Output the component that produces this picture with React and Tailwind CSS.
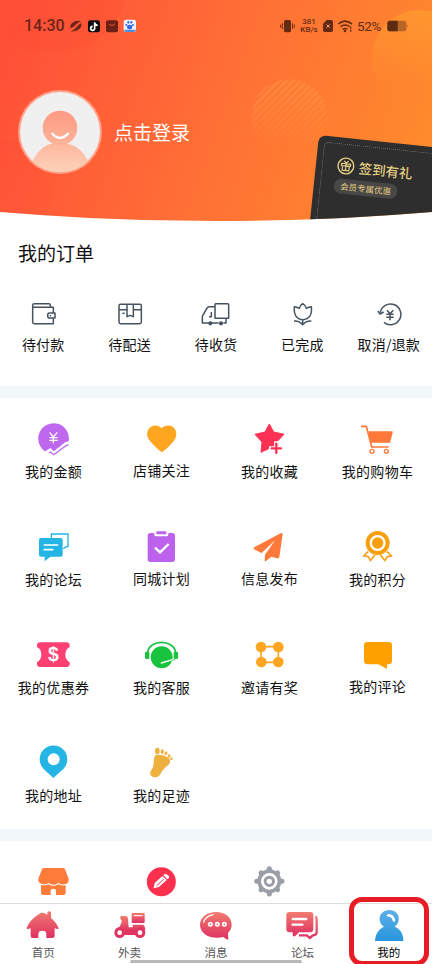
import React from 'react';

const Icon = ({ box, className = 'w-9 h-9', children }) => (
    <svg viewBox={box} className={className} fill="none">
        {children}
    </svg>
);

const orders = [
    {
        label: '待付款',
        box: '82 204 96 96',
        icon: (
            <>
                <path d="M99 231V226Q99 221 104 221H148Q152 221 152 226V231" />
                <path d="M161 249V232H99V276Q99 281 104 281H161V264" />
                <path d="M149 249H166V264H149Q144 264 144 257Q144 249 149 249Z" />
                <path d="M150 257H154" />
            </>
        ),
    },
    {
        label: '待配送',
        box: '341 204 96 96',
        icon: (
            <>
                <path d="M360 223H419Q423 223 423 228V276Q423 281 418 281H361Q356 281 356 276V228Q356 223 360 223Z" />
                <path d="M356 239H380M399 239H423" />
                <path d="M380 224V260L389 256L399 260V224" />
                <path d="M366 250H373" />
            </>
        ),
    },
    {
        label: '待收货',
        box: '600 204 96 96',
        icon: (
            <>
                <path d="M645 265V223Q645 221 648 221H683Q686 221 686 224V265H645Z" />
                <path d="M644 230H627Q622 231 620 236L607 259V279H656M670 279H678V266" />
                <path d="M634 246V260H627" />
                <circle cx="631" cy="280" r="4" fill="#46535f" />
                <circle cx="663" cy="280" r="4" fill="#46535f" />
            </>
        ),
    },
    {
        label: '已完成',
        box: '211 204 96 96',
        icon: (
            <>
                <path d="M236 230Q244 230 251 235Q253 226 261 221Q270 226 272 235Q279 230 287 230Q291 267 261 269Q233 267 236 230Z" />
                <path d="M261 269V285M235 273Q251 272 261 284Q271 272 287 273" />
            </>
        ),
    },
    {
        label: '取消/退款',
        box: '471 204 96 96',
        icon: (
            <>
                <path d="M493 248A31 31 0 1 1 504 277" />
                <path d="M486 243L492 252L503 246" />
                <path d="M513 241L522 251L532 241M522 251V271M511 253H533M511 262H533" />
            </>
        ),
    },
];

const services = [
    {
        label: '我的金额',
        box: '108 60 108 108',
        icon: (
            <>
                <path
                    d="M139 156A46 46 0 1 1 206 124L195 127L160 156L151 148Z"
                    fill="#bd68ee"
                />
                <path d="M137 156L151 147L161 157L196 132H205" stroke="#fff" strokeWidth="5" />
                <path d="M147 159L151 156L161 164L198 137L205 135" stroke="#bd68ee" strokeWidth="4" />
                <path d="M149 97L160 111L172 97M160 111V130M148 113H173M148 121H173" stroke="#fff" strokeWidth="4" />
            </>
        ),
    },
    {
        label: '店铺关注',
        up: true,
        box: '432 60 108 108',
        icon: (
            <path
                d="M485 85C477 75 463 74 453 80C440 88 438 106 447 119C456 131 470 144 481 154Q485 158 490 154C502 144 516 131 524 119C532 106 530 88 518 80C507 74 493 75 485 85Z"
                fill="#ffa51f"
            />
        ),
    },
    {
        label: '我的收藏',
        box: '108 60 108 108',
        icon: (
            <>
                <path
                    d="M160 72L173 96L204 103L184 124L188 150L160 145L135 157L138 126L117 103L147 96Z"
                    fill="#fd3154"
                    stroke="#fd3154"
                    strokeWidth="3"
                    strokeLinejoin="round"
                />
                <path d="M181 124V166M159 145H202" stroke="#fff" strokeWidth="13" />
                <path d="M181 131V159M167 145H195" stroke="#fd3154" strokeWidth="7" strokeLinecap="round" />
            </>
        ),
    },
    {
        label: '我的购物车',
        box: '432 60 108 108',
        icon: (
            <>
                <path d="M457 94H527Q531 94 530 98L522 128H464Z" fill="#ff793a" />
                <path d="M435 79H451L467 141H518" stroke="#ff793a" strokeWidth="5" />
                <circle cx="468" cy="154" r="6" stroke="#ff793a" strokeWidth="4" />
                <circle cx="511" cy="154" r="6" stroke="#ff793a" strokeWidth="4" />
            </>
        ),
    },
    {
        label: '我的论坛',
        box: '108 384 108 108',
        icon: (
            <>
                <path d="M154 414V402H204V440H198L190 446" stroke="#24b5e5" strokeWidth="4" />
                <path
                    d="M123 414H182Q188 414 188 420V464Q188 470 182 470H151L134 484V470H123Q117 470 117 464V420Q117 414 123 414Z"
                    fill="#24b5e5"
                />
                <path d="M133 435H173M133 449H158" stroke="#fff" strokeWidth="5" strokeLinecap="round" />
            </>
        ),
    },
    {
        label: '同城计划',
        up: true,
        box: '432 384 108 108',
        icon: (
            <>
                <rect x="443" y="399" width="82" height="87" rx="8" fill="#bd62ed" />
                <path d="M463 396V404Q463 409 468 409H500Q505 409 505 404V396Z" fill="#fff" />
                <rect x="469" y="394" width="30" height="9" rx="2" fill="#bd62ed" />
                <path d="M465 443L480 457L506 432" stroke="#fff" strokeWidth="7" />
            </>
        ),
    },
    {
        label: '信息发布',
        up: true,
        box: '108 384 108 108',
        icon: (
            <path
                d="M113 445Q112 443 116 441L194 400Q200 397 200 403L190 471Q189 476 184 475L166 470L149 484Q147 485 146 482L147 464L177 421L137 459L116 449Z"
                fill="#ff793a"
            />
        ),
    },
    {
        label: '我的积分',
        box: '432 384 108 108',
        icon: (
            <>
                <path d="M456 455L443 468L457 470L463 482L477 464" stroke="#f99f18" strokeWidth="5" strokeLinejoin="round" />
                <path d="M513 455L527 468L514 470L507 482L493 464" stroke="#f99f18" strokeWidth="5" strokeLinejoin="round" />
                <circle cx="485" cy="429" r="30" fill="#fff" stroke="#f99f0d" strokeWidth="12" />
                <circle cx="485" cy="429" r="17" fill="#f99f0d" />
            </>
        ),
    },
    {
        label: '我的优惠券',
        box: '108 78 108 108',
        icon: (
            <>
                <path
                    d="M120 97H200Q208 97 209 105L209 111Q196 118 196 134Q196 150 209 156V163Q208 171 200 171H120Q112 171 111 163V156Q124 150 124 134Q124 118 111 111V105Q112 97 120 97Z"
                    fill="#fe4172"
                />
                <text
                    x="160"
                    y="154"
                    textAnchor="middle"
                    fontSize="58"
                    fontWeight="700"
                    fill="#fff"
                    fontFamily="Liberation Sans, sans-serif"
                >
                    $
                </text>
            </>
        ),
    },
    {
        label: '我的客服',
        box: '432 78 108 108',
        icon: (
            <>
                <path d="M443 128C446 87 523 87 527 128" stroke="#18c43e" strokeWidth="5" />
                <rect x="435" y="125" width="13" height="22" rx="4" fill="#18c43e" />
                <rect x="521" y="125" width="13" height="22" rx="4" fill="#18c43e" />
                <circle cx="485" cy="142" r="33" fill="#18c43e" />
                <path d="M484 159L518 149" stroke="#fff" strokeWidth="4" strokeLinecap="round" />
                <path d="M517 151Q525 150 528 144" stroke="#18c43e" strokeWidth="3" />
            </>
        ),
    },
    {
        label: '邀请有奖',
        box: '108 78 108 108',
        icon: (
            <>
                <path d="M135 110H187V157H135Z" stroke="#ffa522" strokeWidth="5" />
                <g fill="#ffa522">
                    <circle cx="135" cy="111" r="16" />
                    <circle cx="187" cy="111" r="16" />
                    <circle cx="136" cy="156" r="16" />
                    <circle cx="187" cy="156" r="16" />
                </g>
            </>
        ),
    },
    {
        label: '我的评论',
        up: true,
        box: '432 78 108 108',
        icon: (
            <path
                d="M454 96H518Q528 96 528 106V153Q528 162 518 163H513V177L487 163H454Q444 162 444 153V106Q444 96 454 96Z"
                fill="#ffa000"
            />
        ),
    },
    {
        label: '我的地址',
        box: '108 402 108 108',
        icon: (
            <>
                <path d="M160 504L131 477A41.500 41.500 0 1 1 190 477Z" fill="#24b5e5" />
                <circle cx="161" cy="448" r="18" fill="#fff" />
            </>
        ),
    },
    {
        label: '我的足迹',
        box: '432 402 108 108',
        icon: (
            <g fill="#eeb13f">
                <path d="M468 435Q489 431 505 443Q515 452 507 463Q486 480 481 493Q475 504 460 501Q446 496 453 482Q463 469 461 452Q462 438 468 435Z" />
                <ellipse cx="472" cy="423" rx="7" ry="10" />
                <ellipse cx="487" cy="425" rx="5" ry="7" />
                <ellipse cx="498" cy="430" rx="4" ry="6" transform="rotate(20 498 430)" />
                <ellipse cx="507" cy="438" rx="4" ry="5" transform="rotate(30 507 438)" />
                <ellipse cx="514" cy="446" rx="4" ry="4" />
            </g>
        ),
    },
];

const tools = [
    {
        name: 'shop',
        box: '108 129 108 108',
        icon: (
            <>
                <path d="M132 144H189Q193 144 195 148L206 176Q208 191 194 192Q184 197 176 188Q161 200 145 188Q137 197 125 191Q113 188 115 176L126 148Q128 144 132 144Z" fill="#ff7b39" />
                <path d="M123 195Q136 198 145 193Q161 202 176 193Q186 199 197 195V219Q196 225 190 225H168V212Q168 206 160 206Q152 206 152 212V225H130Q124 225 123 219Z" fill="#ff7b39" />
            </>
        ),
    },
    {
        name: 'edit',
        box: '432 129 108 108',
        icon: (
            <>
                <circle cx="484" cy="185" r="43.5" fill="#ff304e" />
                <path d="M461 205L464 189L487 168L500 180L477 201Z" fill="#fff" />
                <path d="M490 165L495 161Q498 160 506 167Q509 171 507 174L502 178Z" fill="#fff" />
                <path d="M470 197L491 178" stroke="#ff304e" strokeWidth="3" />
            </>
        ),
    },
    {
        name: 'settings',
        box: '108 129 108 108',
        icon: (
            <>
                <g stroke="#9a9fa7" strokeWidth="15" strokeLinecap="round">
                    <path d="M160 146V222M122 184H198" />
                    <path d="M135 159L185 209M185 159L135 209" />
                </g>
                <circle cx="160" cy="184" r="36" fill="#9a9fa7" />
                <circle cx="160" cy="184" r="21" stroke="#fff" strokeWidth="8" />
                <circle cx="160" cy="184" r="8" fill="#fff" />
            </>
        ),
    },
];

const tabs = [
    {
        label: '首页',
        box: '76 261 108 108',
        icon: (
            <path
                d="M123 279Q128 277 133 279L143 284V277Q149 270 154 277V294Q170 307 177 325Q177 328 173 327L165 325V348Q165 354 158 354H140V342Q140 332 128 332Q116 332 116 342V354H99Q93 354 93 348V325L85 327Q80 328 81 324Q91 297 123 279Z"
                fill="url(#pink)"
            />
        ),
    },
    {
        label: '外卖',
        box: '335 261 108 108',
        icon: (
            <>
                <path d="M362 288H377Q383 290 383 297L385 322H397V314H429Q434 319 435 327L432 334H360L343 335Q344 325 358 320L365 304L361 297Q357 292 362 288Z" fill="url(#pink)" />
                <path d="M365 331H424V345H365Z" fill="#e03563" />
                <rect x="394" y="279" width="39" height="30" rx="3" fill="url(#pink)" />
                <path d="M400 287H427" stroke="#fff" strokeWidth="3" />
                <circle cx="358" cy="338" r="16" fill="#e03563" />
                <circle cx="419" cy="338" r="16" fill="#e03563" />
                <circle cx="358" cy="338" r="7" fill="#fff" />
                <circle cx="419" cy="338" r="7" fill="#fff" />
            </>
        ),
    },
    {
        label: '消息',
        box: '594 261 108 108',
        icon: (
            <>
                <path d="M648 276C674 276 695 291 695 314C695 325 690 332 684 338L685 359Q679 359 670 351C637 359 600 345 600 314C600 292 622 276 648 276Z" fill="url(#pink)" />
                <circle cx="631" cy="313" r="5" stroke="#fff" strokeWidth="5" />
                <circle cx="652" cy="313" r="5" stroke="#fff" strokeWidth="5" />
                <circle cx="673" cy="313" r="5" stroke="#fff" strokeWidth="5" />
                <path d="M611 306Q615 290 639 284" stroke="#fff" strokeWidth="4" strokeLinecap="round" />
            </>
        ),
    },
    {
        label: '论坛',
        box: '205 261 108 108',
        icon: (
            <>
                <path d="M299 290Q303 292 303 298V337Q302 346 291 346L283 354L273 346H250" stroke="url(#pink)" strokeWidth="7" strokeLinejoin="round" />
                <path d="M221 276H284Q293 276 293 285V328Q292 337 284 337H250L238 349Q231 350 231 344V337H221Q212 337 212 328V285Q212 276 221 276Z" fill="url(#pink)" />
                <path d="M231 297H272M231 314H260" stroke="#fff" strokeWidth="7" strokeLinecap="round" />
            </>
        ),
    },
    {
        label: '我的',
        active: true,
        box: '464 261 108 108',
        icon: (
            <>
                <path d="M519 270C552 271 555 307 535 320C553 327 561 343 561 363H476C477 343 486 328 503 320C482 307 486 271 519 270Z" fill="url(#sky)" />
                <path d="M516 286Q529 285 533 301" stroke="#fff" strokeWidth="8" strokeLinecap="round" />
            </>
        ),
    },
];

const StatusBar = () => (
    <div className="relative flex items-center h-[52px] pl-6 pr-6 text-[#6b2418]">
        <span className="w-[45px] text-[16px] font-medium font-[Roboto,sans-serif]">14:30</span>
        <Icon box="207 56 204 42" className="w-[68px] h-[14px]">
            <path d="M211 84Q209 71 221 65Q231 59 243 62Q233 66 226 74Q219 82 211 84Z" fill="#6b2418" />
            <path d="M244 68Q246 79 237 87Q227 95 212 93Q222 90 228 82Q235 73 244 68Z" fill="#6b2418" />
            <rect x="264" y="60" width="36" height="36" rx="7" fill="#130d12" />
            <path d="M284 66V84A6 6 0 1 1 278 78M284 68Q286 75 293 75" stroke="#fff" strokeWidth="5" />
            <rect x="318" y="60" width="36" height="36" rx="6" fill="#6b2014" />
            <path d="M327 70Q335 81 345 70" stroke="#ff5c38" strokeWidth="3" />
            <rect x="371" y="58" width="37" height="37" rx="7" fill="#eef4ff" />
            <path d="M372 88H408Q407 95 400 95H379Q373 95 372 88Z" fill="#4c8ddd" />
            <g fill="#3567df">
                <ellipse cx="389" cy="80" rx="8" ry="7" />
                <circle cx="379" cy="74" r="3" />
                <circle cx="399" cy="74" r="3" />
                <ellipse cx="385" cy="66" rx="3" ry="4" />
                <ellipse cx="394" cy="66" rx="3" ry="4" />
            </g>
        </Icon>
        <div className="ml-auto flex items-center text-[#642a14]">
            <Icon box="191 56 45 42" className="w-[15px] h-[14px]">
                <rect x="203" y="59" width="21" height="37" rx="5" fill="#642a14" />
                <path d="M198 69V86M229 69V86M193 73V82M234 73V82" stroke="#642a14" strokeWidth="3" />
            </Icon>
            <div className="flex flex-col items-center w-[28px] text-[8px] leading-[8px] font-medium font-[Roboto,sans-serif]">
                <span>381</span>
                <span>KB/s</span>
            </div>
            <Icon box="321 56 90 42" className="w-[30px] h-[14px]">
                <path d="M332 59H345Q351 59 351 65V90Q351 95 346 95H326Q321 95 321 90V70Z" fill="#642a14" />
                <path d="M332 73L341 82M341 73L332 82" stroke="#ffb08a" strokeWidth="3" />
                <g stroke="#642a14" strokeWidth="5">
                    <path d="M367 71Q386 54 408 71M374 79Q387 69 401 79M380 87Q387 82 394 87" />
                </g>
                <circle cx="387" cy="92" r="4" fill="#642a14" />
                <path d="M404 79V85M404 88V94" stroke="#642a14" strokeWidth="4" />
            </Icon>
            <span className="ml-[4px] w-[30px] text-[13.5px] tracking-tight font-[Roboto,sans-serif]">52%</span>
            <Icon box="512 61 63 36" className="w-[21px] h-[12px]">
                <rect x="513" y="63" width="57" height="32" rx="8" fill="#b86528" />
                <path d="M571 73Q577 79 571 85Z" fill="#b86528" />
                <path d="M521 63H544V95H521Q513 95 513 87V71Q513 63 521 63Z" fill="#5d2a12" />
            </Icon>
        </div>
    </div>
);

const MemberCard = () => (
    <div className="absolute left-[319px] top-[135px] w-[150px] h-[120px] origin-top-left rotate-6 rounded-[7px] bg-[#2e2e2f] text-[#e3cd82]">
        <div className="absolute inset-[6px] rounded-[5px] border border-dotted border-[#77746c]" />
        <div className="relative flex items-center gap-1 pl-[21px] pt-[18px]">
            <Icon box="0 0 24 24" className="w-[18px] h-[18px]">
                <g stroke="#e3cd82" strokeWidth="1.6">
                    <circle cx="12" cy="12" r="10.5" strokeWidth="1.9" />
                    <path d="M6 9H18V12H6ZM7.5 12V18H16.5V12M12 9V18M12 8L9 5.5M12 8L15 5.5" />
                </g>
            </Icon>
            <span className="text-[13.5px] leading-[20px] font-medium whitespace-nowrap">签到有礼</span>
        </div>
        <div className="relative ml-[20px] mt-[3px] flex items-center justify-center w-[64px] h-[15px] rounded-full bg-[#484746] text-[8.5px] whitespace-nowrap">
            会员专属优惠
        </div>
    </div>
);

const Header = () => (
    <header className="relative h-[221px] shrink-0 overflow-hidden bg-linear-[110deg] from-[#ff5038] from-5% via-[#ff6f36] via-50% to-[#ff8e2b] [clip-path:circle(2592px_at_50%_-2371px)]">
        <div className="absolute -left-[30px] -top-[90px] w-[158px] h-[142px] rounded-full bg-linear-to-br from-[#ff5a38]/0 to-[#fa4930]/30" />
        <div className="absolute -left-[70px] top-[137px] w-[120px] h-[120px] rounded-full bg-linear-to-b from-[#fb4b39]/25 to-[#fb4b39]/0" />
        <div className="absolute left-[372px] top-[10px] w-[96px] h-[96px] rounded-full bg-linear-to-b from-[#ffa22f]/60 to-[#ff9029]/0 to-80%" />
        <div className="absolute left-[251px] top-[79px] w-[77px] h-[77px] rounded-full bg-[repeating-linear-gradient(135deg,#ffa04a66_0px,#ffa04a66_2px,#ff8a3a33_3px,#ff8a3a33_5px)] mask-b-from-20% mask-b-to-90%" />
        <StatusBar />
        <div className="relative flex items-center gap-[12px] mt-[38px] pl-[18px]">
            <Icon box="54 270 252 252" className="w-[84px] h-[84px]">
                <circle cx="180" cy="396" r="126" fill="#ffa28b" />
                <circle cx="180" cy="396" r="120" fill="#f0f0f0" />
                <path d="M97 483Q125 432 165 430H195Q239 435 264 483Q230 516 180 516Q130 516 97 483Z" fill="url(#body)" />
                <circle cx="180" cy="384" r="52" fill="url(#face)" />
                <path d="M157 401Q180 426 204 401" stroke="#fff" strokeWidth="7" strokeLinecap="round" />
            </Icon>
            <span className="text-[19px] leading-6 text-white">点击登录</span>
        </div>
        <MemberCard />
    </header>
);

const App = () => (
    <div className="relative flex flex-col w-[432px] h-[964px] overflow-hidden bg-white text-[#111] font-['Noto_Sans_CJK_SC',sans-serif]">
        <svg className="absolute w-0 h-0">
            <defs>
                <linearGradient id="pink" x1="0" y1="0" x2="0" y2="1">
                    <stop offset="0" stopColor="#f17c70" />
                    <stop offset="1" stopColor="#df2f62" />
                </linearGradient>
                <linearGradient id="sky" x1="0" y1="0" x2="0" y2="1">
                    <stop offset="0" stopColor="#5cb0e9" />
                    <stop offset="1" stopColor="#2795dd" />
                </linearGradient>
                <linearGradient id="face" x1="0" y1="0" x2="0" y2="1">
                    <stop offset="0" stopColor="#fd9a83" />
                    <stop offset="1" stopColor="#fdb499" />
                </linearGradient>
                <linearGradient id="body" x1="0" y1="0" x2="0" y2="1">
                    <stop offset="0" stopColor="#fdb79d" />
                    <stop offset="1" stopColor="#fdd2b8" />
                </linearGradient>
            </defs>
        </svg>

        <Header />

        <section className="h-[165px] shrink-0 pt-[18px]">
            <h2 className="pl-[18px] text-[19px] leading-[28px]">我的订单</h2>
            <div className="grid grid-cols-5 mt-[31px]">
                {orders.map((item) => (
                    <div key={item.label} className="flex flex-col items-center">
                        <Icon box={item.box} className="w-8 h-8">
                            <g stroke="#46535f" strokeWidth="4.5" strokeLinejoin="round">
                                {item.icon}
                            </g>
                        </Icon>
                        <span className="mt-[4px] text-[14px] leading-5 tracking-[0.2px] whitespace-nowrap">{item.label}</span>
                    </div>
                ))}
            </div>
        </section>

        <section className="grid grid-cols-4 auto-rows-[108px] h-[455px] shrink-0 border-y-12 border-[#f2f7fa]">
            {services.map((item) => (
                <div key={item.label} className="flex flex-col items-center pt-[22px]">
                    <Icon box={item.box}>{item.icon}</Icon>
                    <span className={`-ml-px text-[14px] leading-5 tracking-[0.3px] whitespace-nowrap ${item.up ? 'mt-[4px]' : 'mt-[5px]'}`}>
                        {item.label}
                    </span>
                </div>
            ))}
        </section>

        <section className="grid grid-cols-4 h-[62px] shrink-0 pt-[22px]">
            {tools.map((item) => (
                <div key={item.name} className="flex justify-center">
                    <Icon box={item.box}>{item.icon}</Icon>
                </div>
            ))}
        </section>

        <nav className="relative grid grid-cols-5 h-[61px] shrink-0 border-t border-[#dedede] bg-white">
            {tabs.map((tab) => (
                <div key={tab.label} className="flex flex-col items-center pt-[3px]">
                    <Icon box={tab.box}>{tab.icon}</Icon>
                    <span className={`mt-[1px] text-[11.5px] leading-4 ${tab.active ? 'text-black' : 'text-[#555]'}`}>
                        {tab.label}
                    </span>
                </div>
            ))}
            <div className="absolute left-[130px] bottom-[1px] w-[172px] h-[3px] rounded-full bg-[#b9b9b9]" />
            <div className="absolute left-[349px] -top-[7px] w-[80px] h-[69px] rounded-[13px] border-5 border-[#e71d25]" />
        </nav>
    </div>
);

export default App;
